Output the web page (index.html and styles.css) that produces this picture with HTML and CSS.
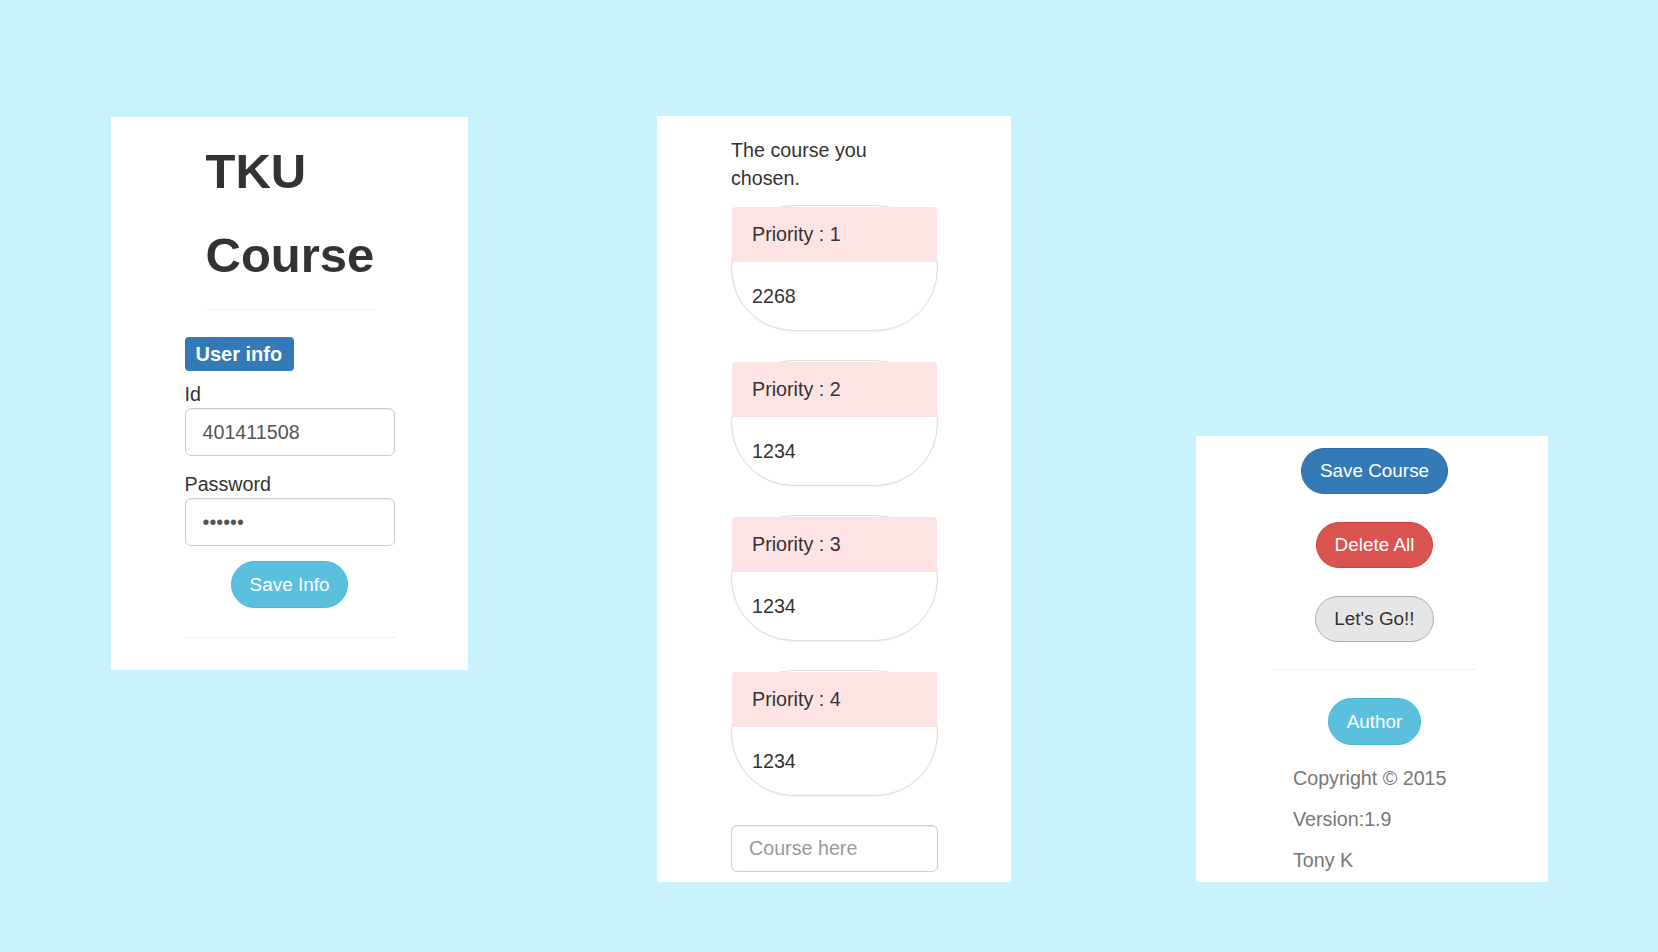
FILE: index.html
```html
<!DOCTYPE html>
<html>
<head>
<meta charset="utf-8">
<title>TKU Course</title>
<link rel="stylesheet" href="styles.css">
</head>
<body>
<div class="page">
  <section class="panel panel-user">
    <div class="brand">
      <h1 class="brand-title">TKU Course</h1>
      <hr class="rule brand-rule">
    </div>
    <div class="form-col">
      <span class="badge">User info</span>
      <label class="field-label label-id">Id</label>
      <div class="input">401411508</div>
      <label class="field-label label-pw">Password</label>
      <div class="input input-pw">••••••</div>
      <div class="btn-row"><button class="btn btn-info">Save Info</button></div>
      <hr class="rule form-rule">
    </div>
  </section>

  <section class="panel panel-courses">
    <div class="course-col">
      <p class="intro">The course you chosen.</p>
      <div class="card">
        <div class="card-head">Priority : 1</div>
        <div class="card-body">2268</div>
      </div>
      <div class="card">
        <div class="card-head">Priority : 2</div>
        <div class="card-body">1234</div>
      </div>
      <div class="card">
        <div class="card-head">Priority : 3</div>
        <div class="card-body">1234</div>
      </div>
      <div class="card">
        <div class="card-head">Priority : 4</div>
        <div class="card-body">1234</div>
      </div>
      <div class="input placeholder">Course here</div>
    </div>
  </section>

  <section class="panel panel-actions">
    <div class="action-col">
      <div class="btn-row"><button class="btn btn-primary">Save Course</button></div>
      <div class="btn-row"><button class="btn btn-danger">Delete All</button></div>
      <div class="btn-row"><button class="btn btn-default">Let's Go!!</button></div>
      <hr class="rule action-rule">
      <div class="btn-row"><button class="btn btn-info">Author</button></div>
      <div class="credits">
        <p>Copyright © 2015</p>
        <p>Version:1.9</p>
        <p>Tony K</p>
      </div>
    </div>
  </section>
</div>
</body>
</html>
```

FILE: styles.css
```css
* { box-sizing: border-box; }

html, body {
  margin: 0;
  padding: 0;
}

body {
  background: #c8f2fc;
  font-family: "Liberation Sans", Arial, Helvetica, sans-serif;
  font-size: 19.7px;
  line-height: 28px;
  color: #333;
  width: 1658px;
  height: 952px;
  overflow: hidden;
}

.page {
  display: flex;
  align-items: flex-start;
  padding: 116px 0 0 111px;
}

.panel {
  background: #fff;
}

.panel-user {
  width: 357px;
  height: 553px;
  margin-top: 1px;
  padding-top: 12px;
}

.panel-courses {
  width: 354px;
  height: 766px;
  margin-left: 189px;
  padding-top: 20px;
  overflow: hidden;
}

.panel-actions {
  width: 352px;
  height: 446px;
  margin-left: 185px;
  margin-top: 320px;
  padding-top: 12px;
}

/* left panel */
.brand {
  width: 168px;
  margin: 0 auto;
}

.brand-title {
  margin: 0;
  font-size: 49px;
  line-height: 84px;
  font-weight: bold;
  color: #333;
}

.rule {
  border: 0;
  border-top: 1px solid #eee;
  margin: 0;
  height: 0;
}

.brand-rule {
  margin-top: 12px;
}

.form-col {
  width: 210px;
  margin: 0 auto;
  padding-top: 27px;
}

.badge {
  display: inline-block;
  background: #337ab7;
  color: #fff;
  font-weight: bold;
  font-size: 20px;
  line-height: 20px;
  padding: 7px 12px 7px 11px;
  border-radius: 4px;
}

.field-label {
  display: block;
  font-size: 19.7px;
  line-height: 28px;
}

.label-id {
  margin-top: 9px;
}

.label-pw {
  margin-top: 14px;
}

.input {
  height: 48px;
  border: 1px solid #ccc;
  border-radius: 6px;
  padding: 0 17px;
  line-height: 46px;
  color: #555;
  font-size: 19.7px;
  box-shadow: inset 0 1px 1px rgba(0,0,0,.075);
  background: #fff;
}

.input-pw {
  font-size: 19.7px;
  letter-spacing: 0;
}

.btn-row {
  display: flex;
  justify-content: center;
}

.panel-user .btn-row {
  margin-top: 15px;
}

.btn {
  font-family: inherit;
  font-size: 18.9px;
  height: 47px;
  line-height: 45px;
  padding: 0 18px;
  border-radius: 24px;
  border: 1px solid transparent;
  cursor: pointer;
}

.btn-info {
  background: #5bc0de;
  border-color: #46b8da;
  color: #fff;
}

.btn-primary {
  background: #337ab7;
  border-color: #2e6da4;
  color: #fff;
}

.btn-danger {
  background: #d9534f;
  border-color: #d43f3a;
  color: #fff;
}

.btn-default {
  background: #e6e6e6;
  border-color: #adadad;
  color: #333;
}

.form-rule {
  margin-top: 29px;
}

/* middle panel */
.course-col {
  width: 208px;
  margin: 0 0 0 74px;
}

.intro {
  margin: 0 0 13px;
  width: 200px;
}

.card {
  border: 1px solid #ddd;
  border-radius: 64px;
  background: #fff;
  box-shadow: 0 1px 1px rgba(0,0,0,.05);
  margin-bottom: 29px;
  width: 207px;
}

.card-head {
  background: #fde3e4;
  height: 55px;
  line-height: 54px;
  padding: 0 20px;
  border-radius: 4px 4px 0 0;
  margin-top: 1px;
}

.card-body {
  padding: 20px 20px 20px;
  line-height: 28px;
}

.placeholder {
  color: #999;
  width: 207px;
  height: 47px;
  line-height: 45px;
  margin-top: 6px;
}

/* right panel */
.action-col {
  width: 203px;
  margin-left: 77px;
}

.action-col .btn-row {
  margin-bottom: 28px;
}

.btn-primary, .btn-danger, .btn-default {
  height: 46px;
  line-height: 44px;
}

.action-rule {
  margin-top: -1px;
  margin-bottom: 28px;
}

.credits {
  padding-left: 20px;
  color: #777;
  margin-top: -9px;
}

.credits p {
  margin: 0 0 13px;
  line-height: 28px;
}
```
